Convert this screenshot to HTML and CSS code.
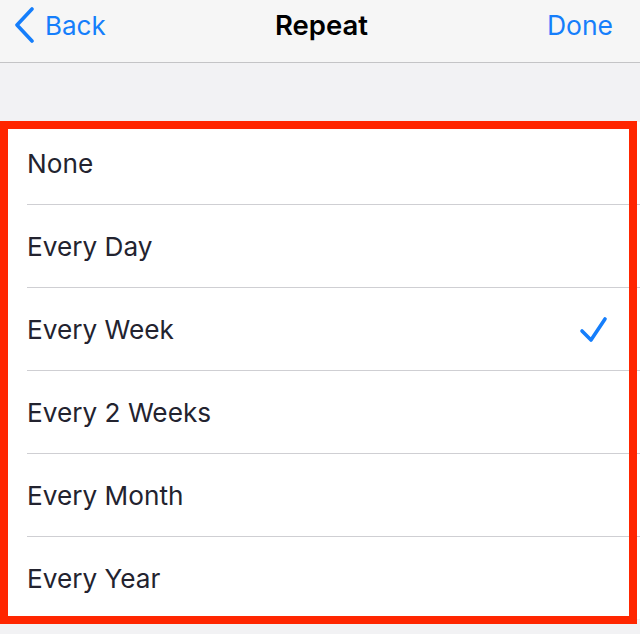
FILE: index.html
```html
<!DOCTYPE html>
<html lang="en">
<head>
    <meta charset="UTF-8">
    <meta name="viewport" content="width=device-width, initial-scale=1.0">
    <title>Repeat</title>
    <link rel="stylesheet" href="styles.css">
</head>
<body>
    <header class="navbar">
        <button class="nav-back">
            <svg class="chevron" width="22" height="36" viewBox="0 0 22 36">
                <path d="M18 2 L3 18 L18 34" fill="none" stroke="#157efb" stroke-width="3.6" stroke-linecap="round" stroke-linejoin="round"/>
            </svg>
            <span>Back</span>
        </button>
        <h1 class="nav-title">Repeat</h1>
        <button class="nav-done">Done</button>
    </header>

    <div class="list-wrap">
        <ul class="options">
            <li class="option">None</li>
            <li class="option">Every Day</li>
            <li class="option selected">
                <span>Every Week</span>
                <svg class="check" width="30" height="30" viewBox="0 0 30 30">
                    <path d="M3 16 L12 25 L26 4" fill="none" stroke="#157efb" stroke-width="3.6" stroke-linecap="round" stroke-linejoin="round"/>
                </svg>
            </li>
            <li class="option">Every 2 Weeks</li>
            <li class="option">Every Month</li>
            <li class="option">Every Year</li>
        </ul>
        <!-- red highlight box drawn on top of the list -->
        <div class="highlight"></div>
    </div>
</body>
</html>
```

FILE: styles.css
```css
body, html {
    margin: 0;
    padding: 0;
    box-sizing: border-box;
    font-family: Inter, "Noto Sans", sans-serif;
}
body {
    background-color: #f2f2f4;
    width: 640px;
    height: 634px;
    overflow: hidden;
}
.navbar {
    height: 63px;
    box-sizing: border-box;
    background-color: #f6f6f6;
    border-bottom: 1px solid #c4c4c6;
    display: flex;
    align-items: center;
    justify-content: space-between;
    padding: 0 27px 12px 14px;
    position: relative;
}
.navbar button {
    border: none;
    background: none;
    padding: 0;
    font-family: inherit;
    font-size: 26px;
    color: #157efb;
    cursor: pointer;
}
.nav-done {
    font-size: 26.5px !important;
}
.nav-back {
    display: flex;
    align-items: center;
    gap: 9px;
}
.chevron {
    display: block;
}
.nav-title {
    margin: 0;
    font-size: 27.5px;
    font-weight: 600;
    color: #000;
    position: absolute;
    top: 0;
    bottom: 12px;
    left: 0;
    right: 0;
    display: flex;
    align-items: center;
    justify-content: center;
    pointer-events: none;
    padding-left: 3px;
}
.list-wrap {
    margin-top: 59px;
    position: relative;
}
.options {
    list-style: none;
    margin: 0;
    padding: 0 0 0 27px;
    background-color: #fff;
}
.option {
    height: 82px;
    display: flex;
    align-items: center;
    justify-content: space-between;
    padding-right: 31px;
    font-size: 26.2px;
    color: #23232f;
    border-bottom: 1px solid #cfcfd3;
}
.option:last-child {
    border-bottom: none;
}
.check {
    display: block;
    margin-top: 1px;
}
.highlight {
    position: absolute;
    top: -1px;
    left: 0;
    width: 637px;
    height: 503px;
    box-sizing: border-box;
    border: 8px solid #ff2600;
}
```
